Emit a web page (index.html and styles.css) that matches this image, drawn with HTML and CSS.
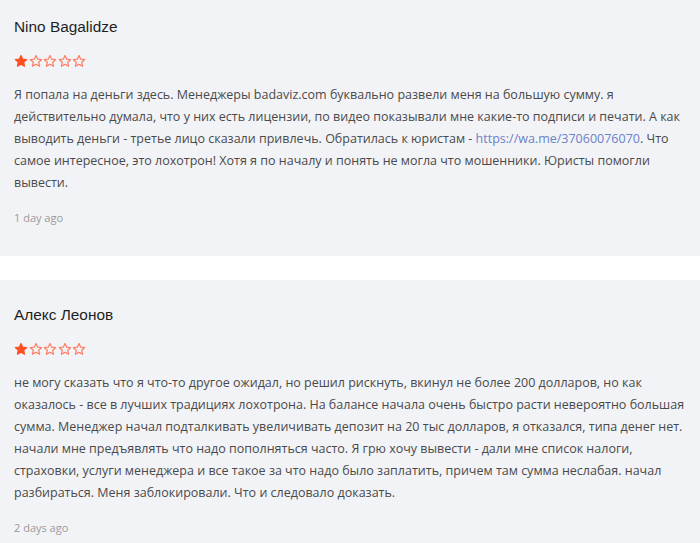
FILE: index.html
```html
<!DOCTYPE html>
<html lang="ru">
<head>
    <meta charset="UTF-8">
    <meta name="viewport" content="width=device-width, initial-scale=1.0">
    <title>Отзывы</title>
    <link rel="stylesheet" href="styles.css">
</head>
<body>

<div class="reviews">
    <div class="review">
        <div class="review-name">Nino Bagalidze</div>
        <div class="stars">
            <svg class="star filled" viewBox="0 0 24 24"><path d="M12 2.5l2.9 6.3 6.9.7-5.2 4.6 1.5 6.8L12 17.4l-6.1 3.5 1.5-6.8-5.2-4.6 6.9-.7z"/></svg>
            <svg class="star" viewBox="0 0 24 24"><path d="M12 2.5l2.9 6.3 6.9.7-5.2 4.6 1.5 6.8L12 17.4l-6.1 3.5 1.5-6.8-5.2-4.6 6.9-.7z"/></svg>
            <svg class="star" viewBox="0 0 24 24"><path d="M12 2.5l2.9 6.3 6.9.7-5.2 4.6 1.5 6.8L12 17.4l-6.1 3.5 1.5-6.8-5.2-4.6 6.9-.7z"/></svg>
            <svg class="star" viewBox="0 0 24 24"><path d="M12 2.5l2.9 6.3 6.9.7-5.2 4.6 1.5 6.8L12 17.4l-6.1 3.5 1.5-6.8-5.2-4.6 6.9-.7z"/></svg>
            <svg class="star" viewBox="0 0 24 24"><path d="M12 2.5l2.9 6.3 6.9.7-5.2 4.6 1.5 6.8L12 17.4l-6.1 3.5 1.5-6.8-5.2-4.6 6.9-.7z"/></svg>
        </div>
        <p class="review-text">Я попала на деньги здесь. Менеджеры badaviz.com буквально развели меня на большую сумму. я действительно думала, что у них есть лицензии, по видео показывали мне какие-то подписи и печати. А как выводить деньги - третье лицо сказали привлечь. Обратилась к юристам - <a href="#">https://wa.me/37060076070</a>. Что самое интересное, это лохотрон! Хотя я по началу и понять не могла что мошенники. Юристы помогли вывести.</p>
        <div class="review-date">1 day ago</div>
    </div>

    <div class="review">
        <div class="review-name">Алекс Леонов</div>
        <div class="stars">
            <svg class="star filled" viewBox="0 0 24 24"><path d="M12 2.5l2.9 6.3 6.9.7-5.2 4.6 1.5 6.8L12 17.4l-6.1 3.5 1.5-6.8-5.2-4.6 6.9-.7z"/></svg>
            <svg class="star" viewBox="0 0 24 24"><path d="M12 2.5l2.9 6.3 6.9.7-5.2 4.6 1.5 6.8L12 17.4l-6.1 3.5 1.5-6.8-5.2-4.6 6.9-.7z"/></svg>
            <svg class="star" viewBox="0 0 24 24"><path d="M12 2.5l2.9 6.3 6.9.7-5.2 4.6 1.5 6.8L12 17.4l-6.1 3.5 1.5-6.8-5.2-4.6 6.9-.7z"/></svg>
            <svg class="star" viewBox="0 0 24 24"><path d="M12 2.5l2.9 6.3 6.9.7-5.2 4.6 1.5 6.8L12 17.4l-6.1 3.5 1.5-6.8-5.2-4.6 6.9-.7z"/></svg>
            <svg class="star" viewBox="0 0 24 24"><path d="M12 2.5l2.9 6.3 6.9.7-5.2 4.6 1.5 6.8L12 17.4l-6.1 3.5 1.5-6.8-5.2-4.6 6.9-.7z"/></svg>
        </div>
        <p class="review-text">не могу сказать что я что-то другое ожидал, но решил рискнуть, вкинул не более 200 долларов, но как оказалось - все в лучших традициях лохотрона. На балансе начала очень быстро расти невероятно большая сумма. Менеджер начал подталкивать увеличивать депозит на 20 тыс долларов, я отказался, типа денег нет. начали мне предъявлять что надо пополняться часто. Я грю хочу вывести - дали мне список налоги, страховки, услуги менеджера и все такое за что надо было заплатить, причем там сумма неслабая. начал разбираться. Меня заблокировали. Что и следовало доказать.</p>
        <div class="review-date">2 days ago</div>
    </div>
</div>

</body>
</html>
```

FILE: styles.css
```css
body {
    margin: 0;
    padding: 0;
    background-color: #fff;
    font-family: "Open Sans", sans-serif;
    overflow: hidden;
}
.reviews {
    display: flex;
    flex-direction: column;
    gap: 24px;
    margin-top: -8px;
}
.review {
    background-color: #f2f3f7;
    padding: 25px 14px 31px;
}
.review-name {
    font-family: "Liberation Sans", Arial, sans-serif;
    font-size: 15.4px;
    line-height: 20px;
    color: #1f1f24;
}
.stars {
    display: flex;
    gap: 0.5px;
    margin-top: 17px;
}
.star {
    width: 14px;
    height: 14px;
    fill: none;
    stroke: #ff7a5c;
    stroke-width: 2;
    stroke-linejoin: round;
}
.star.filled {
    fill: #ff4f1f;
    stroke: #ff4f1f;
}
.review-text {
    margin: 16px 0 0;
    font-size: 12.5px;
    line-height: 22px;
    color: #4a4a4a;
}
.review-text a {
    color: #6b82c9;
    text-decoration: none;
}
.review-date {
    margin-top: 17px;
    font-size: 11px;
    line-height: 14px;
    color: #9a9a9a;
}
```
